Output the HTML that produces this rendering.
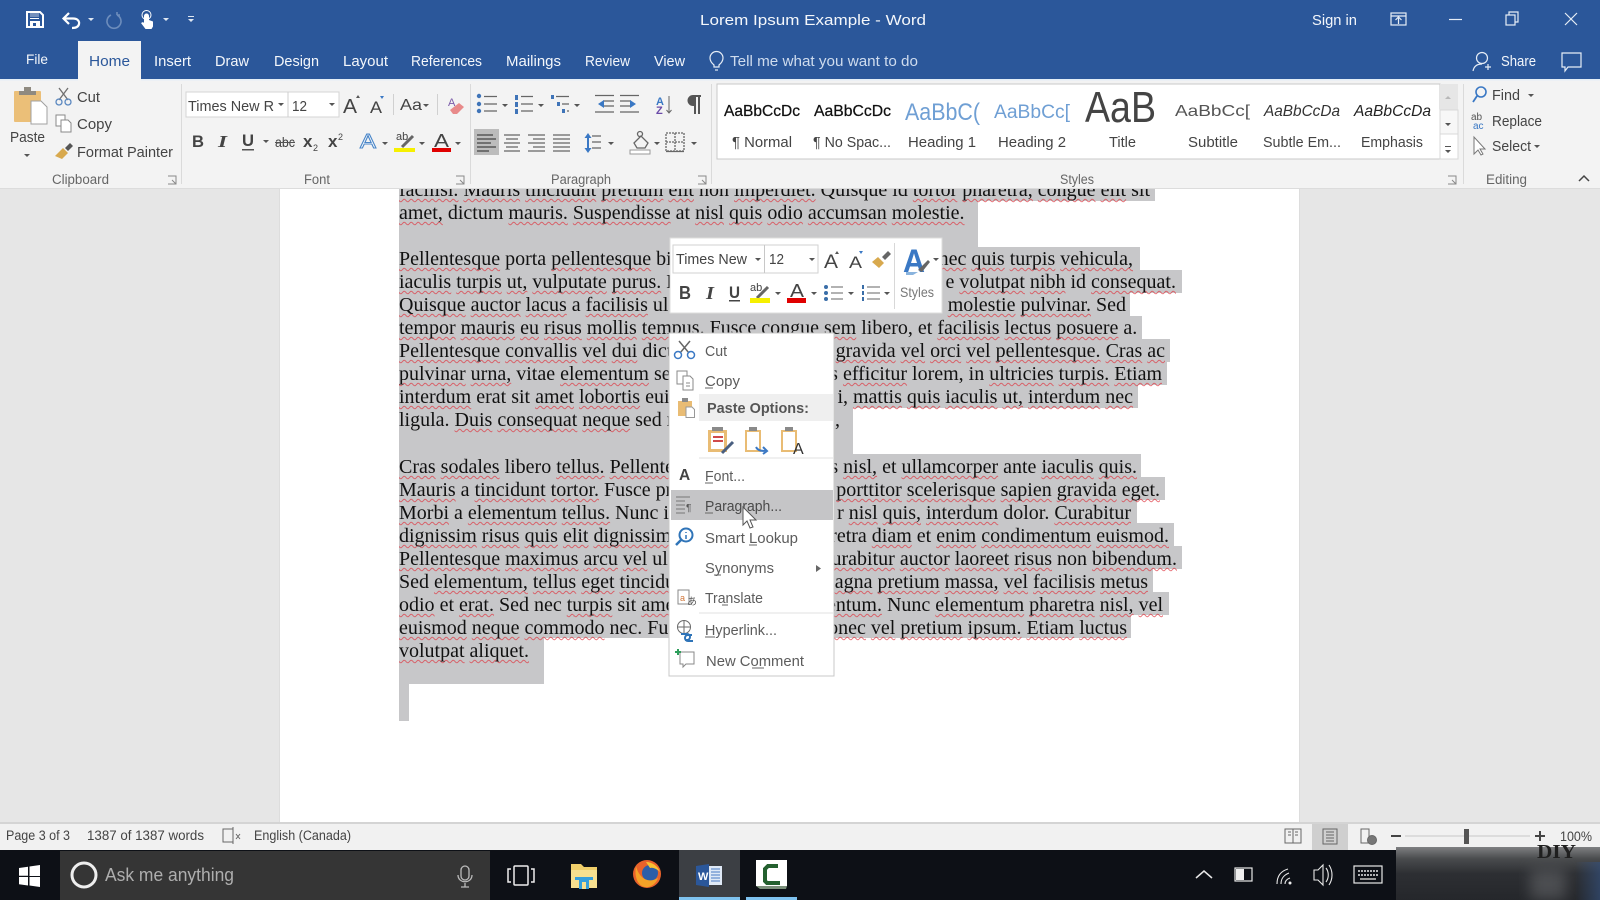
<!DOCTYPE html>
<html><head><meta charset="utf-8"><title>Lorem Ipsum Example - Word</title>
<style>
html,body{margin:0;padding:0;width:1600px;height:900px;overflow:hidden;background:#e6e6e6}
#w{position:absolute;left:0;top:0;width:1600px;height:900px;overflow:hidden;filter:blur(.35px)}
.pg{position:absolute;left:280px;top:180px;width:1019px;height:645px;background:#fff;box-shadow:0 0 1px #bbb}
.s{position:absolute;left:399px;height:23px;background:#c7c7c9}
.l{position:absolute;left:399px;height:23px;line-height:23px;font:20px/23px "Liberation Serif",serif;color:#111;white-space:nowrap}
.r{left:auto}
u{text-decoration:underline wavy rgba(222,52,62,.7);text-decoration-thickness:.8px;text-underline-offset:1.5px;text-decoration-skip-ink:none}
svg{position:absolute;left:0;top:0;font-family:"Liberation Sans",sans-serif}
.t{fill:#444}
.w{fill:#f4f7fb}
.lab{fill:#666}
.d{fill:#555;stroke:none}
</style></head><body><div id="w">
<div class="pg"></div>
<div class="s" style="top:178px;width:756px"></div><div class="s" style="top:201px;width:579px"></div><div class="s" style="top:224px;width:579px"></div>
<div class="s" style="top:247px;width:741px"></div><div class="s" style="top:270px;width:783px"></div><div class="s" style="top:293px;width:731px"></div><div class="s" style="top:316px;width:743px"></div><div class="s" style="top:339px;width:771px"></div><div class="s" style="top:362px;width:768px"></div><div class="s" style="top:385px;width:739px"></div><div class="s" style="top:408px;width:454px"></div><div class="s" style="top:431px;width:454px"></div>
<div class="s" style="top:454px;width:742px"></div><div class="s" style="top:477px;width:766px"></div><div class="s" style="top:500px;width:738px"></div><div class="s" style="top:523px;width:775px"></div><div class="s" style="top:546px;width:783px"></div><div class="s" style="top:569px;width:754px"></div><div class="s" style="top:592px;width:770px"></div><div class="s" style="top:615px;width:732px"></div><div class="s" style="top:638px;width:145px"></div><div class="s" style="top:661px;width:145px"></div><div class="s" style="top:684px;width:10px;height:37px"></div>

<div class="l" style="top:179px"><u>facilisi.</u> <u>Mauris</u> <u>tincidunt</u> <u>pretium</u> <u>elit</u> non <u>imperdiet.</u> Quisque id <u>tortor</u> <u>pharetra,</u> <u>congue</u> <u>elit</u> sit</div>
<div class="l" style="top:202px"><u>amet,</u> dictum <u>mauris.</u> <u>Suspendisse</u> at <u>nisl</u> <u>quis</u> <u>odio</u> <u>accumsan</u> <u>molestie.</u></div>
<div class="l" style="top:248px"><u>Pellentesque</u> porta <u>pellentesque</u> bi</div><div class="l r" style="top:248px;right:467px"><u>nec</u> <u>quis</u> <u>turpis</u> <u>vehicula,</u></div>
<div class="l" style="top:271px"><u>iaculis</u> <u>turpis</u> <u>ut,</u> <u>vulputate</u> <u>purus.</u> N</div><div class="l r" style="top:271px;right:424px">e <u>volutpat</u> <u>nibh</u> id <u>consequat.</u></div>
<div class="l" style="top:294px"><u>Quisque</u> <u>auctor</u> <u>lacus</u> a <u>facilisis</u> ul</div><div class="l r" style="top:294px;right:474px"><u>molestie</u> <u>pulvinar.</u> Sed</div>
<div class="l" style="top:317px"><u>tempor</u> <u>mauris</u> <u>eu</u> <u>risus</u> <u>mollis</u> <u>tempus.</u> Fusce <u>congue</u> <u>sem</u> libero, et <u>facilisis</u> <u>lectus</u> <u>posuere</u> a.</div>
<div class="l" style="top:340px"><u>Pellentesque</u> <u>convallis</u> <u>vel</u> <u>dui</u> dict</div><div class="l r" style="top:340px;right:435px"><u>gravida</u> <u>vel</u> <u>orci</u> <u>vel</u> <u>pellentesque.</u> <u>Cras</u> <u>ac</u></div>
<div class="l" style="top:363px"><u>pulvinar</u> <u>urna,</u> vitae <u>elementum</u> se</div><div class="l r" style="top:363px;right:438px">s <u>efficitur</u> lorem, in <u>ultricies</u> <u>turpis.</u> <u>Etiam</u></div>
<div class="l" style="top:386px"><u>interdum</u> erat sit <u>amet</u> <u>lobortis</u> eui</div><div class="l r" style="top:386px;right:467px">i, <u>mattis</u> <u>quis</u> <u>iaculis</u> <u>ut,</u> <u>interdum</u> <u>nec</u></div>
<div class="l" style="top:409px">ligula. <u>Duis</u> <u>consequat</u> <u>neque</u> sed r</div><div class="l" style="top:409px;left:835px">,</div>
<div class="l" style="top:456px"><u>Cras</u> <u>sodales</u> libero <u>tellus.</u> <u>Pellente</u></div><div class="l r" style="top:456px;right:463px">s <u>nisl,</u> et <u>ullamcorper</u> ante <u>iaculis</u> <u>quis.</u></div>
<div class="l" style="top:479px"><u>Mauris</u> a <u>tincidunt</u> <u>tortor.</u> Fusce pr</div><div class="l r" style="top:479px;right:440px"><u>porttitor</u> <u>scelerisque</u> <u>sapien</u> <u>gravida</u> <u>eget.</u></div>
<div class="l" style="top:502px"><u>Morbi</u> a <u>elementum</u> <u>tellus.</u> Nunc i</div><div class="l r" style="top:502px;right:469px">r <u>nisl</u> <u>quis,</u> <u>interdum</u> dolor. <u>Curabitur</u></div>
<div class="l" style="top:525px"><u>dignissim</u> <u>risus</u> <u>quis</u> <u>elit</u> <u>dignissim</u></div><div class="l r" style="top:525px;right:431px">retra <u>diam</u> et <u>enim</u> <u>condimentum</u> <u>euismod.</u></div>
<div class="l" style="top:548px"><u>Pellentesque</u> <u>maximus</u> <u>arcu</u> <u>vel</u> ul</div><div class="l r" style="top:548px;right:423px"><u>urabitur</u> <u>auctor</u> <u>laoreet</u> <u>risus</u> non <u>bibendum.</u></div>
<div class="l" style="top:571px">Sed <u>elementum,</u> <u>tellus</u> <u>eget</u> <u>tincidu</u></div><div class="l r" style="top:571px;right:452px"><u>agna</u> <u>pretium</u> <u>massa,</u> <u>vel</u> <u>facilisis</u> <u>metus</u></div>
<div class="l" style="top:594px"><u>odio</u> et <u>erat.</u> Sed nec <u>turpis</u> sit <u>ame</u></div><div class="l r" style="top:594px;right:437px"><u>entum.</u> Nunc <u>elementum</u> <u>pharetra</u> <u>nisl,</u> <u>vel</u></div>
<div class="l" style="top:617px"><u>euismod</u> <u>neque</u> <u>commodo</u> nec. Fu</div><div class="l r" style="top:617px;right:473px"><u>onec</u> <u>vel</u> <u>pretium</u> <u>ipsum.</u> <u>Etiam</u> <u>luctus</u></div>
<div class="l" style="top:640px"><u>volutpat</u> <u>aliquet.</u></div>

<svg width="1600" height="900" viewBox="0 0 1600 900">
<defs><filter id="b" x="-30%" y="-30%" width="160%" height="160%"><feGaussianBlur stdDeviation="7"/></filter>
<linearGradient id="bg" x1="0" x2="0" y1="0" y2="1"><stop offset="0" stop-color="#7f8082"/><stop offset=".22" stop-color="#4a4c4e"/><stop offset=".5" stop-color="#2d2f33"/><stop offset="1" stop-color="#25272b"/></linearGradient>
<linearGradient id="bl" x1="0" x2="1" y1="0" y2="0"><stop offset="0" stop-color="#34507c" stop-opacity="0"/><stop offset="1" stop-color="#34507c" stop-opacity=".65"/></linearGradient></defs>
<!-- title + tabs -->
<rect width="1600" height="79" fill="#2b579a"/>
<rect y="79" width="1600" height="1.500" fill="#e4eef7"/>
<rect y="80.500" width="1600" height="107.500" fill="#f3f3f3"/>
<rect y="188" width="1600" height="1" fill="#dcdcdc"/>
<rect x="78" y="41" width="63" height="39.500" fill="#f3f3f3"/>
<path d="M27 12h13l3 3v12H27z" fill="none" stroke="#fff" stroke-width="2"/><rect x="30" y="12" width="9" height="5" fill="#fff" opacity=".35"/><path d="M30 18.500h9" stroke="#fff"/><rect x="30" y="21" width="10" height="6" fill="#fff"/><rect x="33" y="23" width="3" height="3" fill="#2b579a"/>
<g fill="none" stroke="#fff" stroke-width="2.200"><path d="M64 18.500h9c5 0 6.500 3 6 5.500-.5 2.500-3 4-7 4"/><path d="M69 13l-5.500 5.500 5.500 5.500"/></g>
<g fill="none" stroke="#6d8dbc" stroke-width="1.600"><path d="M111 15a7 7 0 1 0 6 0M117 15v-3M117 15h3"/></g>
<path fill="#fff" d="M144 16a2.500 2.500 0 0 1 5 0v4l4 1.500v5l-1.500 2.500h-6l-4.500-6 2-1 1 1z"/><circle cx="146.500" cy="15" r="4.500" fill="none" stroke="#fff"/>
<path fill="#dfe7f2" d="M88 18h6l-3 3zM163 18h6l-3 3zM188 19h6l-3 3z"/><rect x="188" y="16" width="6" height="1" fill="#dfe7f2"/>
<g font-size="15" class="w">
<text x="700" y="25" textLength="226" lengthAdjust="spacingAndGlyphs" class="w">Lorem Ipsum Example - Word</text>
<text x="1312" y="25" textLength="45" lengthAdjust="spacingAndGlyphs" class="w">Sign in</text>
<text x="26" y="64" textLength="22" lengthAdjust="spacingAndGlyphs" class="w" font-size="14">File</text>
<text x="89" y="66" textLength="41" lengthAdjust="spacingAndGlyphs" style="fill:#2b579a">Home</text>
<text x="154" y="66" textLength="37" lengthAdjust="spacingAndGlyphs" class="w">Insert</text>
<text x="215" y="66" textLength="34" lengthAdjust="spacingAndGlyphs" class="w">Draw</text>
<text x="274" y="66" textLength="45" lengthAdjust="spacingAndGlyphs" class="w">Design</text>
<text x="343" y="66" textLength="45" lengthAdjust="spacingAndGlyphs" class="w">Layout</text>
<text x="411" y="66" textLength="71" lengthAdjust="spacingAndGlyphs" class="w">References</text>
<text x="506" y="66" textLength="55" lengthAdjust="spacingAndGlyphs" class="w">Mailings</text>
<text x="585" y="66" textLength="45" lengthAdjust="spacingAndGlyphs" class="w">Review</text>
<text x="654" y="66" textLength="31" lengthAdjust="spacingAndGlyphs" class="w">View</text>
<text x="730" y="66" textLength="188" lengthAdjust="spacingAndGlyphs" style="fill:#cfdcee">Tell me what you want to do</text>
<text x="1501" y="66" textLength="35" lengthAdjust="spacingAndGlyphs" class="w">Share</text>
</g>
<g fill="none" stroke="#e6edf6" stroke-width="1.200">
<path d="M714 67v-2c-3-2.500-4-5-4-7a6.500 6.500 0 0 1 13 0c0 2-1 4.500-4 7v2z"/><path d="M715 70h3"/>
<circle cx="1482" cy="58" r="5.500"/><path d="M1473 71c1-5 4-7 9-7m3 3h6m-3-3v6"/>
<path d="M1562 53h19v14h-13l-3 4v-4h-3z"/>
<rect x="1391" y="13" width="15" height="12"/><path d="M1391 16h15M1398.500 24v-6m-3 2l3-3 3 3"/>
<path d="M1449 19.500h13"/><rect x="1506" y="15" width="9" height="10"/><path d="M1509 15v-3h9v10h-3"/>
<path d="M1565 13l12 12m0-12l-12 12"/>
</g>
<!-- ribbon groups -->
<g fill="#dadada"><rect x="181" y="84" width="1" height="100"/><rect x="470" y="84" width="1" height="100"/><rect x="711" y="84" width="1" height="100"/><rect x="1463" y="84" width="1" height="100"/></g>
<!-- clipboard -->
<rect x="14" y="91" width="27" height="31" rx="1" fill="#ebbf78"/><rect x="19" y="91" width="17" height="4" fill="#8f8a80"/><rect x="24" y="87" width="7" height="5" fill="#8f8a80"/>
<path d="M31 101h10l6 6v17H31z" fill="#fff" stroke="#a0a0a0"/>
<g fill="none" stroke="#6f6f6f" stroke-width="1.300"><path d="M59 88l9 12M68 88l-9 12"/></g><g fill="none" stroke="#5b88c0" stroke-width="1.300"><circle cx="59" cy="102" r="3"/><circle cx="68" cy="102" r="3"/></g>
<g fill="#fff" stroke="#8a8a8a"><path d="M56 115h9v11h-9z"/><path d="M61 120h7l3 3v9H61z"/></g>
<path d="M55 156l8-8 5 5-6 6z" fill="#d8a94e"/><path d="M65 148l5-5 3 3-5 5z" fill="#555"/>
<g font-size="14.500" class="t">
<text x="10" y="142" textLength="35" lengthAdjust="spacingAndGlyphs" class="t">Paste</text>
<text x="77" y="102" textLength="23" lengthAdjust="spacingAndGlyphs" class="t">Cut</text>
<text x="77" y="129" textLength="35" lengthAdjust="spacingAndGlyphs" class="t">Copy</text>
<text x="77" y="157" textLength="96" lengthAdjust="spacingAndGlyphs" class="t">Format Painter</text>
</g>
<path class="d" d="M24 154h6l-3 3z"/>
<g font-size="13.500">
<text x="52" y="184" textLength="57" lengthAdjust="spacingAndGlyphs" class="lab">Clipboard</text>
<text x="304" y="184" textLength="26" lengthAdjust="spacingAndGlyphs" class="lab">Font</text>
<text x="551" y="184" textLength="60" lengthAdjust="spacingAndGlyphs" class="lab">Paragraph</text>
<text x="1060" y="184" textLength="34" lengthAdjust="spacingAndGlyphs" class="lab">Styles</text>
<text x="1486" y="184" textLength="41" lengthAdjust="spacingAndGlyphs" class="lab">Editing</text>
</g>
<g fill="none" stroke="#888"><path d="M168 176h8v8h-8M172 180l4 4"/><path d="M456 176h8v8h-8M460 180l4 4"/><path d="M698 176h8v8h-8M702 180l4 4"/><path d="M1448 176h8v8h-8M1452 180l4 4"/><path d="M1579 181l5-5 5 5" stroke="#444" stroke-width="1.500"/></g>
<!-- font group -->
<rect x="186" y="92" width="153" height="25" fill="#fff" stroke="#d4d4d4"/><path d="M288 92v25" stroke="#cfcfcf"/>
<text x="188" y="111" font-size="15" textLength="86" lengthAdjust="spacingAndGlyphs" class="t">Times New R</text>
<text x="292" y="111" font-size="15" textLength="15" lengthAdjust="spacingAndGlyphs" class="t">12</text>
<path class="d" d="M278 103h6l-3 3zM329 103h6l-3 3zM423 104h6l-3 3zM263 140h6l-3 3zM382 142h6l-3 3zM419 142h6l-3 3zM455 142h6l-3 3zM502 104h6l-3 3zM538 104h6l-3 3zM574 104h6l-3 3zM608 142h6l-3 3zM654 142h6l-3 3zM691 142h6l-3 3z"/>
<text x="343" y="113" font-size="20" textLength="14" lengthAdjust="spacingAndGlyphs" class="t">A</text><text x="370" y="113" font-size="17" textLength="12" lengthAdjust="spacingAndGlyphs" class="t">A</text>
<path fill="#555" d="M356 98l2-3 2 3z"/><path fill="#3a78c4" d="M380 96l2 3 2-3z"/>
<rect x="393" y="94" width="1" height="21" fill="#d0d0d0"/><rect x="437" y="94" width="1" height="21" fill="#d0d0d0"/>
<text x="400" y="110" font-size="16" textLength="22" lengthAdjust="spacingAndGlyphs" class="t">Aa</text>
<text x="448" y="106" font-size="11" fill="#7a5aa8">A</text><path d="M450 110l9-7 5 4-7 7h-4z" fill="#e88a8a"/>
<text x="192" y="147" font-size="17" font-weight="bold" textLength="12" lengthAdjust="spacingAndGlyphs" class="t">B</text>
<text x="218" y="147" font-size="17" font-style="italic" font-family="Liberation Serif" font-weight="bold" textLength="9" lengthAdjust="spacingAndGlyphs" class="t">I</text>
<text x="242" y="146" font-size="17" font-weight="bold" textLength="12" lengthAdjust="spacingAndGlyphs" class="t">U</text><rect x="242" y="149" width="12" height="1.500" fill="#555"/>
<text x="275" y="147" font-size="14" textLength="20" lengthAdjust="spacingAndGlyphs" class="t">abc</text><rect x="275" y="142" width="20" height="1" fill="#555"/>
<text x="303" y="147" font-size="17" font-weight="bold" class="t">x</text><text x="313" y="151" font-size="9" class="t">2</text>
<text x="328" y="147" font-size="17" font-weight="bold" class="t">x</text><text x="338" y="140" font-size="9" class="t">2</text>
<text x="360" y="148" font-size="20" textLength="16" lengthAdjust="spacingAndGlyphs" fill="#fff" stroke="#4a86c8" stroke-width="1">A</text>
<text x="396" y="140" font-size="11" class="t">ab</text><path d="M402 147l11-11" stroke="#666" stroke-width="3"/><rect x="394" y="148" width="21" height="4" fill="#f6f000"/>
<text x="434" y="147" font-size="18" textLength="15" lengthAdjust="spacingAndGlyphs" class="t">A</text><rect x="432" y="148" width="19" height="4" fill="#e00000"/>
<!-- paragraph -->
<g fill="#3f74b8"><circle cx="479" cy="96" r="2.200"/><circle cx="479" cy="104" r="2.200"/><circle cx="479" cy="111" r="2.200"/><rect x="515" y="95" width="3" height="5"/><rect x="515" y="102" width="3" height="5"/><rect x="515" y="109" width="3" height="5"/><rect x="551" y="95" width="3" height="4"/><rect x="557" y="102" width="3" height="4"/><rect x="562" y="109" width="3" height="4"/></g>
<g stroke="#666" stroke-width="1.300" fill="none">
<path d="M484 96.500h13M484 104h13M484 111h13M521 96.500h12M521 104h12M521 111h12M556 96.500h13M562 104h7M567 111h2"/>
<path d="M595 95.500h19M603 101h11M603 106h11M595 112h19M620 95.500h19M620 101h11M620 106h11M620 112h19"/>
<path d="M477 135h16M477 139h19M477 143h14M477 147h19M477 151h12" stroke="#555"/>
<path d="M504 135h16M506 139h12M504 143h16M506 147h12M504 151h16M528 135h17M533 139h12M528 143h17M533 147h12M528 151h17M553 135h17M553 139h17M553 143h17M553 147h17M553 151h17"/>
<path d="M592 136h9M592 142h9M592 148h9"/>
<rect x="666" y="133" width="18" height="18" stroke-dasharray="2 1"/><path d="M675 133v18M666 142h18" stroke-dasharray="2 1"/><path d="M666 151.500h18"/>
<path d="M634 143l7-7 7 7-3 5h-8z"/><circle cx="640" cy="134" r="2.500"/>
</g>
<rect x="630" y="150" width="20" height="4" fill="#fff" stroke="#999"/>
<path d="M701 95h-8a5.500 5.500 0 0 0 0 11h1v8h2V97h2v17h2V97h1z" fill="#555"/>
<rect x="474" y="129" width="25" height="26" fill="#c6c6c6" style="mix-blend-mode:multiply"/>
<g fill="#3a78c4"><path d="M598 104l6-4v8z"/><path d="M636 104l-6-4v8z"/><path d="M588 133l-3.500 5h7zM588 153l-3.500-5h7z"/><rect x="587" y="137" width="2" height="12"/></g>
<text x="656" y="105" font-size="11" font-weight="bold" fill="#3a78c4">A</text><text x="656" y="114" font-size="11" font-weight="bold" fill="#6a4aa8">Z</text><path d="M669 96v17m-2.500-3l2.500 3 2.500-3" stroke="#666" fill="none"/>
<!-- styles -->
<rect x="717" y="84" width="723" height="75" fill="#fff" stroke="#c8c8c8"/>
<rect x="1440" y="84" width="18" height="26" fill="#e6e6e6"/><rect x="1440" y="110" width="18" height="24" fill="#f7f7f7" stroke="#d8d8d8"/><rect x="1440" y="134" width="18" height="25" fill="#fff" stroke="#d8d8d8"/>
<path fill="#555" d="M1445 123h6l-3 3zM1445 150h6l-3 3z"/><path fill="#b8b8b8" d="M1445 99h6l-3-3z"/><rect x="1445" y="146" width="6" height="1" fill="#555"/>
<g font-size="16">
<text x="724" y="116" textLength="76" lengthAdjust="spacingAndGlyphs" fill="#111" stroke="#111" stroke-width=".25">AaBbCcDc</text>
<text x="814" y="116" textLength="77" lengthAdjust="spacingAndGlyphs" fill="#111" stroke="#111" stroke-width=".25">AaBbCcDc</text>
<text x="905" y="120" font-size="24" textLength="75" lengthAdjust="spacingAndGlyphs" fill="#6f9fd4">AaBbC(</text>
<text x="994" y="118" font-size="19" textLength="76" lengthAdjust="spacingAndGlyphs" fill="#6f9fd4">AaBbCc[</text>
<text x="1085" y="122" font-size="44" textLength="71" lengthAdjust="spacingAndGlyphs" fill="#444">AaB</text>
<text x="1175" y="116" textLength="75" lengthAdjust="spacingAndGlyphs" fill="#555">AaBbCc[</text>
<text x="1264" y="116" font-style="italic" textLength="76" lengthAdjust="spacingAndGlyphs" fill="#333">AaBbCcDa</text>
<text x="1354" y="116" font-style="italic" textLength="77" lengthAdjust="spacingAndGlyphs" fill="#222">AaBbCcDa</text>
</g>
<rect x="1085" y="85" width="75" height="7" fill="#fff"/>
<g font-size="14.500">
<text x="732" y="147" textLength="60" lengthAdjust="spacingAndGlyphs" class="t">¶ Normal</text>
<text x="813" y="147" textLength="78" lengthAdjust="spacingAndGlyphs" class="t">¶ No Spac...</text>
<text x="908" y="147" textLength="68" lengthAdjust="spacingAndGlyphs" class="t">Heading 1</text>
<text x="998" y="147" textLength="68" lengthAdjust="spacingAndGlyphs" class="t">Heading 2</text>
<text x="1109" y="147" textLength="27" lengthAdjust="spacingAndGlyphs" class="t">Title</text>
<text x="1188" y="147" textLength="50" lengthAdjust="spacingAndGlyphs" class="t">Subtitle</text>
<text x="1263" y="147" textLength="78" lengthAdjust="spacingAndGlyphs" class="t">Subtle Em...</text>
<text x="1361" y="147" textLength="62" lengthAdjust="spacingAndGlyphs" class="t">Emphasis</text>
<text x="1492" y="100" textLength="28" lengthAdjust="spacingAndGlyphs" class="t">Find</text>
<text x="1492" y="126" textLength="50" lengthAdjust="spacingAndGlyphs" class="t">Replace</text>
<text x="1492" y="151" textLength="39" lengthAdjust="spacingAndGlyphs" class="t">Select</text>
</g>
<path class="d" d="M1528 94h6l-3 3zM1534 145h6l-3 3z"/>
<circle cx="1481" cy="92" r="5" fill="none" stroke="#3a78c4" stroke-width="1.600"/><path d="M1477 96l-4 6" stroke="#3a78c4" stroke-width="1.800"/>
<text x="1471" y="120" font-size="10" fill="#555">ab</text><text x="1473" y="129" font-size="10" fill="#3a78c4">ac</text>
<path d="M1474 137v17l4-4 3 5 2-1-3-5h5z" fill="#fff" stroke="#777"/>

<!-- status bar -->
<rect y="823" width="1600" height="27" fill="#f1f1f1"/><rect y="822" width="1600" height="2" fill="#d4d4d4"/>
<rect x="1312" y="824" width="36" height="26" fill="#cfcfcf"/>
<g font-size="13.500">
<text x="6" y="840" textLength="64" lengthAdjust="spacingAndGlyphs" class="t">Page 3 of 3</text>
<text x="87" y="840" textLength="117" lengthAdjust="spacingAndGlyphs" class="t">1387 of 1387 words</text>
<text x="254" y="840" textLength="97" lengthAdjust="spacingAndGlyphs" class="t">English (Canada)</text>
<text x="1560" y="841" textLength="32" lengthAdjust="spacingAndGlyphs" class="t">100%</text>
</g>
<g fill="none" stroke="#666"><path d="M233 829h-10v13h10M233 827v17M236 834l4 5m0-5l-4 5"/>
<rect x="1285" y="829" width="16" height="14"/><path d="M1293 829v14M1288 832h3M1288 835h3M1295 832h3M1295 835h3"/>
<rect x="1323" y="829" width="14" height="15"/><path d="M1326 832h8M1326 835h8M1326 838h8M1326 841h8"/>
<path d="M1361 829h8v14h-8z"/><circle cx="1372" cy="840" r="4.500" fill="#777"/>
<path d="M1405 836h125" stroke="#c8c8c8"/></g>
<rect x="1464" y="829" width="5" height="15" fill="#555"/><path d="M1391 836h10M1535 836h10M1540 831v10" stroke="#444" stroke-width="2"/>
<!-- taskbar -->
<rect y="850" width="1600" height="50" fill="#0d1016"/>
<rect x="60" y="851" width="430" height="49" fill="#353535"/>
<path fill="#fff" d="M19 868l9-1.300v9h-9zM29.500 866.500l10.500-1.500v11H29.500zM19 877h9v8.500l-9-1.200zM29.500 877H40v10l-10.500-1.500z"/>
<circle cx="84" cy="875" r="12" fill="none" stroke="#eee" stroke-width="3"/>
<text x="105" y="881" font-size="18" textLength="129" lengthAdjust="spacingAndGlyphs" fill="#aeaeae">Ask me anything</text>
<g fill="none" stroke="#bbb" stroke-width="1.300"><rect x="461" y="866" width="8" height="14" rx="4"/><path d="M458 875c0 9 14 9 14 0M465 883v4M461 887h8"/></g>
<g fill="none" stroke="#eee" stroke-width="1.500"><rect x="514" y="866" width="14" height="19" rx="1"/><path d="M511 869h-3v13h3M531 869h3v13h-3"/></g>
<path d="M571 864h10l3 3h13v21h-26z" fill="#f0cf6a"/><rect x="571" y="870" width="26" height="18" fill="#f7e08f"/><rect x="579" y="879" width="10" height="10" fill="#36a0dc"/><rect x="575" y="877" width="18" height="3" fill="#36a0dc"/><rect x="582" y="882" width="4" height="7" fill="#f7e08f"/>
<circle cx="647" cy="874" r="14" fill="#e8622b"/><circle cx="650" cy="873" r="8" fill="#2d5ea8"/><path d="M636 866c3 12 12 18 22 12-2 6-8 10-13 9-7-1-11-10-9-21z" fill="#f4a227"/><path d="M646 862c6 0 12 4 14 10-3-3-7-5-10-4z" fill="#f8c032"/>
<rect x="679" y="850" width="61" height="47" fill="#3c3f44"/><rect x="679" y="897" width="61" height="3" fill="#7ec2ef"/>
<rect x="708" y="866" width="14" height="19" fill="#dfe9f6"/><path d="M711 869h9M711 872h9M711 875h9M711 878h9M711 881h9" stroke="#4a7cc4"/><path d="M696 866l13-2v23l-13-2z" fill="#2b579a"/>
<text x="698" y="880" font-size="11" font-weight="bold" fill="#fff">W</text>
<rect x="746" y="897" width="51" height="3" fill="#7ec2ef"/>
<rect x="756" y="860" width="31" height="26" fill="#fff"/><path d="M756 886h31l-1 3h-26z" fill="#7a8f7a"/><path d="M778 866h-10l-3 3v12l2 2h13" fill="none" stroke="#24602f" stroke-width="4"/>
<g fill="none" stroke="#e8e8e8" stroke-width="1.500"><path d="M1196 878l8-7 8 7"/><rect x="1235" y="868" width="17" height="13" stroke-width="1.200"/><rect x="1236" y="869" width="8" height="11" fill="#eee" stroke="none"/>
<path d="M1277 884c0-8 4-13 11-15M1281 884c0-6 3-9 8-11M1285 884c0-3 2-5 5-6" stroke-width="1.100"/><path d="M1314 870h4l5-5v20l-5-5h-4zM1326 868c3 4 3 10 0 14M1329 865c4 6 4 14 0 20" stroke-width="1.100"/>
<rect x="1354" y="866" width="28" height="17" stroke-width="1.200"/><path d="M1358 871h20M1358 875h20" stroke-dasharray="2 1"/><path d="M1360 879h16" stroke="#999" stroke-width="2"/></g>
<circle cx="1290" cy="883" r="1.500" fill="#eee"/>
<rect x="1396" y="847" width="204" height="53" fill="url(#bg)"/>
<rect x="1530" y="868" width="36" height="32" fill="#5a5b5e" opacity=".7" filter="url(#b)"/>
<rect x="1575" y="862" width="25" height="38" fill="url(#bl)"/>
<text x="1537" y="858" font-family="Liberation Serif" font-weight="bold" font-size="20" textLength="39" lengthAdjust="spacingAndGlyphs" fill="#1f1f1f">DIY</text>

<!-- mini toolbar -->
<rect x="670" y="238" width="272" height="75" fill="#fff" stroke="#dcdcdc"/>
<rect x="673" y="245" width="145" height="28" fill="#fff" stroke="#d2d2d2"/><rect x="764" y="245" width="1" height="28" fill="#c8c8c8"/>
<text x="676" y="264" font-size="15" textLength="71" lengthAdjust="spacingAndGlyphs" class="t">Times New</text>
<text x="769" y="264" font-size="15" textLength="15" lengthAdjust="spacingAndGlyphs" class="t">12</text>
<path class="d" d="M755 258h6l-3 3zM809 258h6l-3 3zM933 258h6l-3 3zM775 292h6l-3 3zM811 292h6l-3 3zM848 292h6l-3 3zM884 292h6l-3 3z"/>
<text x="824" y="268" font-size="19" textLength="14" lengthAdjust="spacingAndGlyphs" class="t">A</text><text x="849" y="268" font-size="17" textLength="13" lengthAdjust="spacingAndGlyphs" class="t">A</text>
<path fill="#555" d="M835 254l2-3 2 3z"/><path fill="#3a78c4" d="M859 251l2 3 2-3z"/>
<path d="M872 262l6-5 6 6-5 5z" fill="#d8a94e"/><path d="M882 257l6-6 3 3-6 6z" fill="#666"/>
<rect x="894" y="243" width="1" height="66" fill="#d8d8d8"/>
<text x="903" y="272" font-size="32" font-weight="bold" textLength="22" lengthAdjust="spacingAndGlyphs" fill="#3a78c4">A</text><path d="M918 270l10-10 2 2-8 10z" fill="#666"/><path d="M906 272h12l-5 3h-7z" fill="#8ab4de"/>
<text x="900" y="297" font-size="14" textLength="34" lengthAdjust="spacingAndGlyphs" fill="#777">Styles</text>
<text x="679" y="299" font-size="18" font-weight="bold" textLength="12" lengthAdjust="spacingAndGlyphs" class="t">B</text>
<text x="706" y="299" font-size="18" font-style="italic" font-family="Liberation Serif" font-weight="bold" textLength="8" lengthAdjust="spacingAndGlyphs" class="t">I</text>
<text x="729" y="298" font-size="17" font-weight="bold" textLength="11" lengthAdjust="spacingAndGlyphs" class="t">U</text><rect x="729" y="300" width="11" height="1.500" fill="#444"/>
<text x="750" y="291" font-size="11" class="t">ab</text><path d="M757 298l11-11" stroke="#666" stroke-width="3"/><rect x="750" y="298" width="20" height="5" fill="#f6f000"/>
<text x="790" y="297" font-size="18" textLength="14" lengthAdjust="spacingAndGlyphs" class="t">A</text><rect x="787" y="298" width="19" height="5" fill="#e00000"/>
<g fill="#3a6ea8"><circle cx="826" cy="287" r="2"/><circle cx="826" cy="293" r="2"/><circle cx="826" cy="299" r="2"/><rect x="862" y="285" width="2" height="4"/><rect x="862" y="291" width="2" height="4"/><rect x="862" y="297" width="2" height="4"/></g>
<path d="M831 287h12M831 293h12M831 299h12M867 287h13M867 293h13M867 299h13" stroke="#666" fill="none"/>

<!-- context menu -->
<rect x="669" y="333" width="165" height="343" fill="#fff" stroke="#c8c8c8"/>
<rect x="699" y="394" width="134" height="27" fill="#efefef"/>
<rect x="671" y="490" width="162" height="30" fill="#c5c5c7"/>
<path d="M699 458h134M699 613h134" stroke="#e2e2e2"/>
<g font-size="15" fill="#5c5c5c">
<text x="705" y="356" textLength="22" lengthAdjust="spacingAndGlyphs">Cut</text>
<text x="705" y="386" textLength="35" lengthAdjust="spacingAndGlyphs">Copy</text>
<text x="707" y="413" font-weight="bold" textLength="102" lengthAdjust="spacingAndGlyphs" fill="#555">Paste Options:</text>
<text x="705" y="481" textLength="40" lengthAdjust="spacingAndGlyphs">Font...</text>
<text x="705" y="511" textLength="77" lengthAdjust="spacingAndGlyphs" fill="#4a4a4a">Paragraph...</text>
<text x="705" y="543" textLength="93" lengthAdjust="spacingAndGlyphs">Smart Lookup</text>
<text x="705" y="573" textLength="69" lengthAdjust="spacingAndGlyphs">Synonyms</text>
<text x="705" y="603" textLength="58" lengthAdjust="spacingAndGlyphs">Translate</text>
<text x="705" y="635" textLength="72" lengthAdjust="spacingAndGlyphs">Hyperlink...</text>
<text x="706" y="666" textLength="98" lengthAdjust="spacingAndGlyphs">New Comment</text>
</g>
<path d="M705 388h8M705 483h8M705 513h8M749 545h8M714 575h7M722 605h6M705 637h10M752 668h12" stroke="#666"/>
<path d="M816 565l5 3.500-5 3.500z" fill="#666"/>
<!-- menu icons -->
<g fill="none" stroke-width="1.500"><path d="M679 341l10 12M690 341l-10 12" stroke="#666"/><circle cx="678" cy="355" r="3.500" stroke="#3a78c4"/><circle cx="691" cy="355" r="3.500" stroke="#3a78c4"/></g>
<g fill="#fff" stroke="#8a8a8a"><path d="M677 371h10v13h-10z"/><path d="M683 376h7l3 3v11h-10z"/><path d="M686 383h4M686 386h4"/></g>
<rect x="678" y="401" width="14" height="15" fill="#e9bc74"/><rect x="682" y="398" width="6" height="4" fill="#8a8a8a"/><path d="M686 407h6l2.500 2.500v8H686z" fill="#fff" stroke="#999"/>
<rect x="708" y="430" width="19" height="22" fill="#e9bc74"/><rect x="711" y="433" width="13" height="16" fill="#fff"/><rect x="712" y="427" width="11" height="4" fill="#8a8a8a"/><path d="M713 437h10M713 441h10" stroke="#d04a4a" stroke-width="2"/><path d="M722 453l11-11" stroke="#4a5f80" stroke-width="3"/>
<path d="M746 431h14v20h-14z" fill="#fff" stroke="#e9bc74" stroke-width="2"/><rect x="749" y="427" width="8" height="4" fill="#8a8a8a"/><path d="M756 447c2 4 6 4 11 4m-4-4l4 4-4 3" fill="none" stroke="#3a78c4" stroke-width="2"/>
<path d="M782 431h14v20h-14z" fill="#fff" stroke="#e9bc74" stroke-width="2"/><rect x="785" y="427" width="8" height="4" fill="#8a8a8a"/><text x="793" y="454" font-size="16" fill="#333">A</text>
<text x="679" y="480" font-size="15.500" font-weight="bold" fill="#444">A</text>
<path d="M676 497h14M676 501h9M676 505h9M676 509h9M676 513h9" stroke="#777" fill="none"/><text x="686" y="511" font-size="10" fill="#555">¶</text>
<circle cx="686" cy="535" r="6.500" fill="#fff" stroke="#2f74b8" stroke-width="2"/><path d="M681 540l-5 5" stroke="#2f74b8" stroke-width="2.500"/><path d="M686 532v1M686 535v4" stroke="#2f74b8" stroke-width="1.500"/>
<rect x="678" y="590" width="11" height="14" fill="#fff" stroke="#8a8a8a"/><text x="680" y="601" font-size="9" fill="#d0763a">a</text><text x="687" y="605" font-size="10" fill="#555">あ</text>
<circle cx="684" cy="627" r="6.500" fill="none" stroke="#6a6a6a"/><path d="M677 627h14M684 620v14" stroke="#6a6a6a"/><path d="M681 634h6a3 3 0 0 1 0 6h-2M692 635h-4a3 3 0 0 0 0 6h5" fill="none" stroke="#2f74b8" stroke-width="2"/>
<path d="M680 652h14v12h-8l-3 3v-3h-3z" fill="#fff" stroke="#888"/><path d="M675 652h6M678 649v6" stroke="#2e9e5b" stroke-width="2"/>
<!-- cursor -->
<path d="M743 507v18l4-4 3 7 3-1-3-7h6z" fill="#fff" stroke="#555"/>
</svg>
</div></body></html>
